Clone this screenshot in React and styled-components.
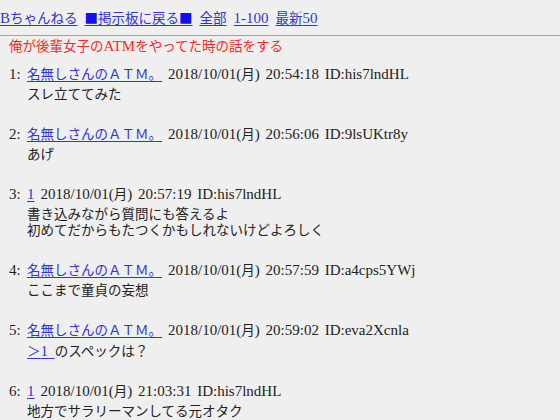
import React from 'react';
import styled, { createGlobalStyle } from 'styled-components';

const Global = createGlobalStyle`
  html, body { margin: 0; padding: 0; background: #efefef; }
  body {
    font-family: "Liberation Serif", "Noto Sans CJK JP", serif;
    font-size: 13.5px;
    color: #222;
  }
`;

const Nav = styled.nav`
  display: flex;
  align-items: baseline;
  gap: 7px;
  height: 16px;
  line-height: 16px;
  padding: 9px 0 10px 0;
  border-bottom: 1px solid #a3a3a3;
`;

const Link = styled.a`
  color: #3434d4;
  text-decoration: underline;
  text-underline-offset: 2px;
  cursor: pointer;
`;

const Square = styled.span`
  font-family: "Noto Sans CJK JP", sans-serif;
  color: #1010f0;
`;

/* half-width (Latin) characters are drawn a little larger, like a Mincho face */
const Half = styled.span`
  font-size: 15px;
`;

const Full = styled.span`
  font-size: 13.5px;
`;

const Main = styled.main`
  padding-left: 9px;
`;

const Title = styled.h1`
  margin: 2px 0 12px 0;
  height: 16px;
  font-size: 13.5px;
  font-weight: normal;
  line-height: 16px;
  color: #f52a2a;
`;

const Post = styled.dl`
  margin: 0;
  padding-bottom: 23px;
`;

const Head = styled.dt`
  display: flex;
  align-items: baseline;
  height: 16px;
  line-height: 16px;
  white-space: nowrap;
`;

const Num = styled.span`
  width: 18px;
  font-size: 15px;
`;

const Meta = styled.span`
  margin-left: 6px;
  font-size: 15px;
  word-spacing: 2px;
`;

const Body = styled.dd`
  margin: 5px 0 0 18px;
  line-height: 16px;
`;

const posts = [
  { n: 1, name: '名無しさんのＡＴＭ。', date: '2018/10/01(月) 20:54:18 ID:his7lndHL', body: ['スレ立ててみた'] },
  { n: 2, name: '名無しさんのＡＴＭ。', date: '2018/10/01(月) 20:56:06 ID:9lsUKtr8y', body: ['あげ'] },
  { n: 3, name: '1', date: '2018/10/01(月) 20:57:19 ID:his7lndHL', body: ['書き込みながら質問にも答えるよ', '初めてだからもたつくかもしれないけどよろしく'] },
  { n: 4, name: '名無しさんのＡＴＭ。', date: '2018/10/01(月) 20:57:59 ID:a4cps5YWj', body: ['ここまで童貞の妄想'] },
  { n: 5, name: '名無しさんのＡＴＭ。', date: '2018/10/01(月) 20:59:02 ID:eva2Xcnla', anchor: true, body: ['のスペックは？'] },
  { n: 6, name: '1', date: '2018/10/01(月) 21:03:31 ID:his7lndHL', body: ['地方でサラリーマンしてる元オタク'] },
];

function DateText({ value }) {
  const [a, b] = value.split('月');
  return (
    <Meta>
      {a}
      <Full>月</Full>
      {b}
    </Meta>
  );
}

export default function App() {
  return (
    <>
      <Global />
      <Nav>
        <Link><Half>B</Half>ちゃんねる</Link>
        <Link><Square>■</Square>掲示板に戻る<Square>■</Square></Link>
        <Link>全部</Link>
        <Link><Half>1-100</Half></Link>
        <Link>最新<Half>50</Half></Link>
      </Nav>
      <Main>
        <Title>俺が後輩女子の<Half>ATM</Half>をやってた時の話をする</Title>
        {posts.map((p) => (
          <Post key={p.n}>
            <Head>
              <Num>{p.n}:</Num>
              <Link>{p.name === '1' ? <Half>1</Half> : p.name}</Link>
              <DateText value={p.date} />
            </Head>
            <Body>
              {p.anchor && <Link>＞<Half>1</Half>{'\u2002'}</Link>}
              {p.body.map((line, i) => (
                <React.Fragment key={i}>
                  {i > 0 && <br />}
                  {line}
                </React.Fragment>
              ))}
            </Body>
          </Post>
        ))}
      </Main>
    </>
  );
}
